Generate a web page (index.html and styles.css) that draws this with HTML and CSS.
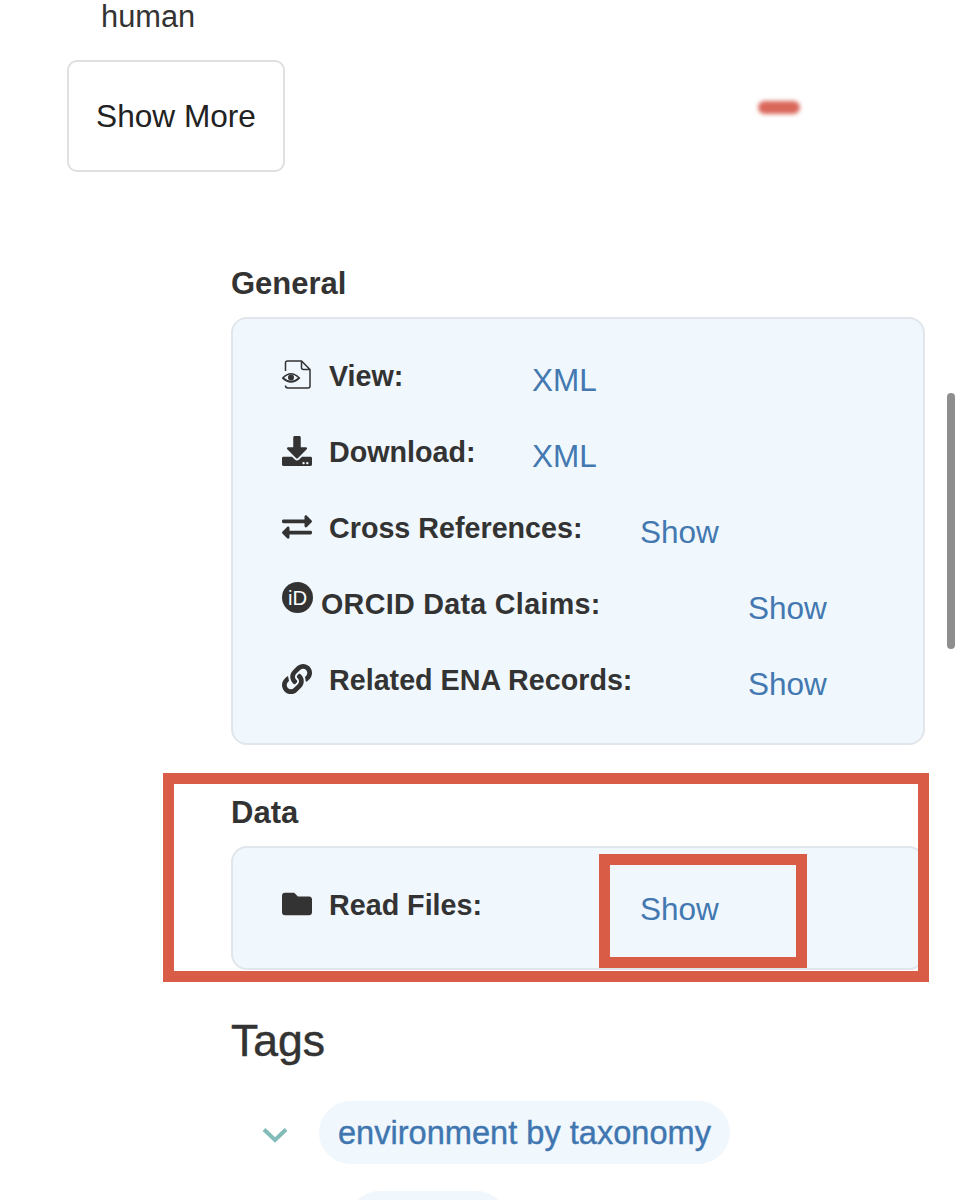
FILE: index.html
```html
<!DOCTYPE html>
<html lang="en">
<head>
<meta charset="utf-8">
<title>Record details</title>
<link rel="stylesheet" href="styles.css">
</head>
<body>
<div class="page">
  <p class="organism">human</p>
  <button class="more-btn" type="button">Show More</button>

  <div class="content">
    <h3 class="group-title group-title--first">General</h3>
    <div class="panel">
      <div class="row">
        <div class="lead lead--sm">
          <svg class="icon" viewBox="0 0 30 30" fill="none" stroke="#333" stroke-width="1.500"><path d="M3.500 11V3Q3.500 1 5.500 1H19.500L28 9.500V26Q28 28 26 28H6Q3.500 28 3.500 25.500M19.500 1V7.500Q19.500 9.500 21.500 9.500H28"/><path d="M0.800 18Q9 9.500 17.200 18Q9 25.500 0.800 18Z" stroke-width="1.700"/><circle cx="9" cy="17.500" r="3" fill="#333" stroke="none"/></svg>
          <span class="label">View:</span>
        </div>
        <a class="value" href="#">XML</a>
      </div>
      <div class="row">
        <div class="lead lead--sm">
          <svg class="icon" viewBox="0 0 512 512" fill="#333"><path d="M216 0h80c13.3 0 24 10.7 24 24v168h87.7c17.8 0 26.7 21.5 14.1 34.1L269.7 378.3c-7.5 7.5-19.8 7.5-27.3 0L90.1 226.1c-12.6-12.6-3.7-34.1 14.1-34.1H192V24c0-13.3 10.7-24 24-24zm296 376v112c0 13.3-10.7 24-24 24H24c-13.3 0-24-10.7-24-24V376c0-13.3 10.7-24 24-24h146.7l49 49c20.1 20.1 52.5 20.1 72.6 0l49-49H488c13.3 0 24 10.7 24 24zm-124 88c0-11-9-20-20-20s-20 9-20 20 9 20 20 20 20-9 20-20zm64 0c0-11-9-20-20-20s-20 9-20 20 9 20 20 20 20-9 20-20z"/></svg>
          <span class="label">Download:</span>
        </div>
        <a class="value" href="#">XML</a>
      </div>
      <div class="row">
        <div class="lead lead--md">
          <svg class="icon" viewBox="0 0 512 512" fill="#333"><path d="M0 168v-16c0-13.255 10.745-24 24-24h360V80c0-21.367 25.899-32.042 40.971-16.971l80 80c9.372 9.373 9.372 24.569 0 33.941l-80 80C409.956 271.982 384 261.456 384 240v-48H24c-13.255 0-24-10.745-24-24zm488 152H128v-48c0-21.314-25.862-32.080-40.971-16.971l-80 80c-9.372 9.373-9.372 24.569 0 33.941l80 80C102.057 463.997 128 453.437 128 432v-48h360c13.255 0 24-10.745 24-24v-16c0-13.255-10.745-24-24-24z"/></svg>
          <span class="label">Cross References:</span>
        </div>
        <a class="value" href="#">Show</a>
      </div>
      <div class="row">
        <div class="lead lead--lg">
          <svg class="icon icon--orcid" viewBox="0 0 32 32"><circle cx="16" cy="16" r="16" fill="#333"/><text class="orcid-mark" x="16" y="23.500" text-anchor="middle">iD</text></svg>
          <span class="label label--caps">ORCID Data Claims:</span>
        </div>
        <a class="value" href="#">Show</a>
      </div>
      <div class="row">
        <div class="lead lead--lg">
          <svg class="icon" viewBox="0 0 512 512" fill="#333"><path d="M326.612 185.391c59.747 59.809 58.927 155.698.36 214.59-.11.12-.24.25-.36.37l-67.2 67.2c-59.27 59.27-155.699 59.262-214.96 0-59.27-59.26-59.27-155.7 0-214.96l37.106-37.106c9.84-9.84 26.786-3.3 27.294 10.606.648 17.722 3.826 35.527 9.69 52.721 1.986 5.822.567 12.262-3.783 16.612l-13.087 13.087c-28.026 28.026-28.905 73.66-1.155 101.96 28.024 28.579 74.086 28.749 102.325.51l67.2-67.19c28.191-28.191 28.073-73.757 0-101.83-3.701-3.694-7.429-6.564-10.341-8.569a16.037 16.037 0 0 1-6.947-12.606c-.396-10.567 3.348-21.456 11.698-29.806l21.054-21.055c5.521-5.521 14.182-6.199 20.584-1.731a152.482 152.482 0 0 1 20.522 17.197zM467.547 44.449c-59.261-59.262-155.69-59.27-214.96 0l-67.2 67.2c-.12.12-.25.25-.36.37-58.566 58.892-59.387 154.781.36 214.59a152.454 152.454 0 0 0 20.521 17.196c6.402 4.468 15.064 3.789 20.584-1.731l21.054-21.055c8.35-8.35 12.094-19.239 11.698-29.806a16.037 16.037 0 0 0-6.947-12.606c-2.912-2.005-6.64-4.875-10.341-8.569-28.073-28.073-28.191-73.639 0-101.83l67.2-67.19c28.239-28.239 74.3-28.069 102.325.51 27.75 28.3 26.872 73.934-1.155 101.96l-13.087 13.087c-4.35 4.35-5.769 10.79-3.783 16.612 5.864 17.194 9.042 34.999 9.69 52.721.509 13.906 17.454 20.446 27.294 10.606l37.106-37.106c59.271-59.259 59.271-155.699.001-214.959z"/></svg>
          <span class="label">Related ENA Records:</span>
        </div>
        <a class="value" href="#">Show</a>
      </div>
    </div>

    <h3 class="group-title">Data</h3>
    <div class="panel">
      <div class="row">
        <div class="lead lead--md">
          <svg class="icon" viewBox="0 0 512 512" fill="#333"><path d="M464 128H272l-64-64H48C21.49 64 0 85.49 0 112v288c0 26.51 21.49 48 48 48h416c26.51 0 48-21.49 48-48V176c0-26.51-21.49-48-48-48z"/></svg>
          <span class="label">Read Files:</span>
        </div>
        <a class="value" href="#">Show</a>
      </div>
    </div>

    <h2 class="tags-title">Tags</h2>
    <div class="tag-row">
      <svg class="chevron" viewBox="0 0 26 16" fill="none" stroke="#82bcb8" stroke-width="4"><path d="M2 2.500L13 13L24 2.500"/></svg>
      <a class="pill" href="#">environment by taxonomy</a>
    </div>
    <div class="tag-row tag-row--nested">
      <span class="pill pill--clipped"></span>
    </div>
  </div>

  <span class="smudge"></span>
  <span class="scroll-thumb"></span>
  <span class="callout callout--section"></span>
  <span class="callout callout--link"></span>
</div>
</body>
</html>
```
FILE: styles.css
```css
* { box-sizing: border-box; }
html, body { margin: 0; height: 1200px; overflow: hidden; background: #fff; }
body { font-family: "Liberation Sans", Arial, sans-serif; color: #333; }
.page { position: relative; width: 961px; height: 1200px; overflow: hidden; padding-left: 68px; }

.organism { margin: 0 0 26px 33px; font-size: 30.800px; line-height: 34px; color: #333; }
.more-btn {
  display: block; width: 218px; height: 112px; padding: 0; margin-left: -1px;
  background: #fff; border: 2px solid #e0e0e0; border-radius: 10px;
  font: 31.600px/38px "Liberation Sans", Arial, sans-serif; color: #222;
}

.content { width: 694px; margin-left: 163px; }
.group-title { margin: 49px 0 14px; font-size: 31px; line-height: 38px; font-weight: 700; color: #333; }
.group-title--first { margin-top: 93px; }

.panel {
  padding: 38px 0 6px 49px;
  background: #f0f7fd; border: 2px solid #e0e6eb; border-radius: 16px;
}
.row { display: flex; align-items: flex-start; height: 76px; }
.lead { display: flex; align-items: flex-start; flex: none; }
.lead--sm { width: 250px; }
.lead--md { width: 358px; }
.lead--lg { width: 466px; }
.icon { flex: none; width: 30px; height: 30px; margin: 3px 17px 0 0; }
.icon--orcid { width: 31px; height: 31px; margin: -3px 8px 0 0; }
.orcid-mark { font-family: "Liberation Sans", Arial, sans-serif; font-size: 21px; fill: #fff; }
.label { font-size: 28.700px; line-height: 38px; font-weight: 700; color: #333; white-space: nowrap; }
.label--caps { letter-spacing: 0.300px; }
.value { font-size: 31.500px; line-height: 38px; margin-top: 4px; color: #4378b0; text-decoration: none; }

.tags-title { margin: 46px 0 35px; font-size: 44.500px; line-height: 50px; font-weight: 400; color: #333; -webkit-text-stroke: 0.500px #333; }
.tag-row { display: flex; align-items: center; gap: 31px; padding-left: 31px; margin-bottom: 27px; }
.tag-row--nested { padding-left: 117px; }
.chevron { flex: none; width: 26px; height: 16px; margin-top: 4px; }
.pill {
  display: inline-block; height: 63px; padding: 0 19px;
  background: #f0f7fd; border-radius: 32px;
  font-size: 32.600px; line-height: 63px; color: #3f76b0; text-decoration: none; white-space: nowrap;
  -webkit-text-stroke: 0.400px #3f76b0;
}
.pill--clipped { width: 160px; }

.smudge {
  position: absolute; left: 758px; top: 101px; width: 42px; height: 13px;
  background: #d9675a; border-radius: 7px; filter: blur(2px);
}
.scroll-thumb {
  position: absolute; left: 947px; top: 393px; width: 8px; height: 256px;
  background: #8e8e8e; border-radius: 4px;
}
.callout { position: absolute; border: 11px solid #d95c47; }
.callout--section { left: 163px; top: 773px; width: 766px; height: 209px; }
.callout--link { left: 599px; top: 854px; width: 208px; height: 114px; }
```
